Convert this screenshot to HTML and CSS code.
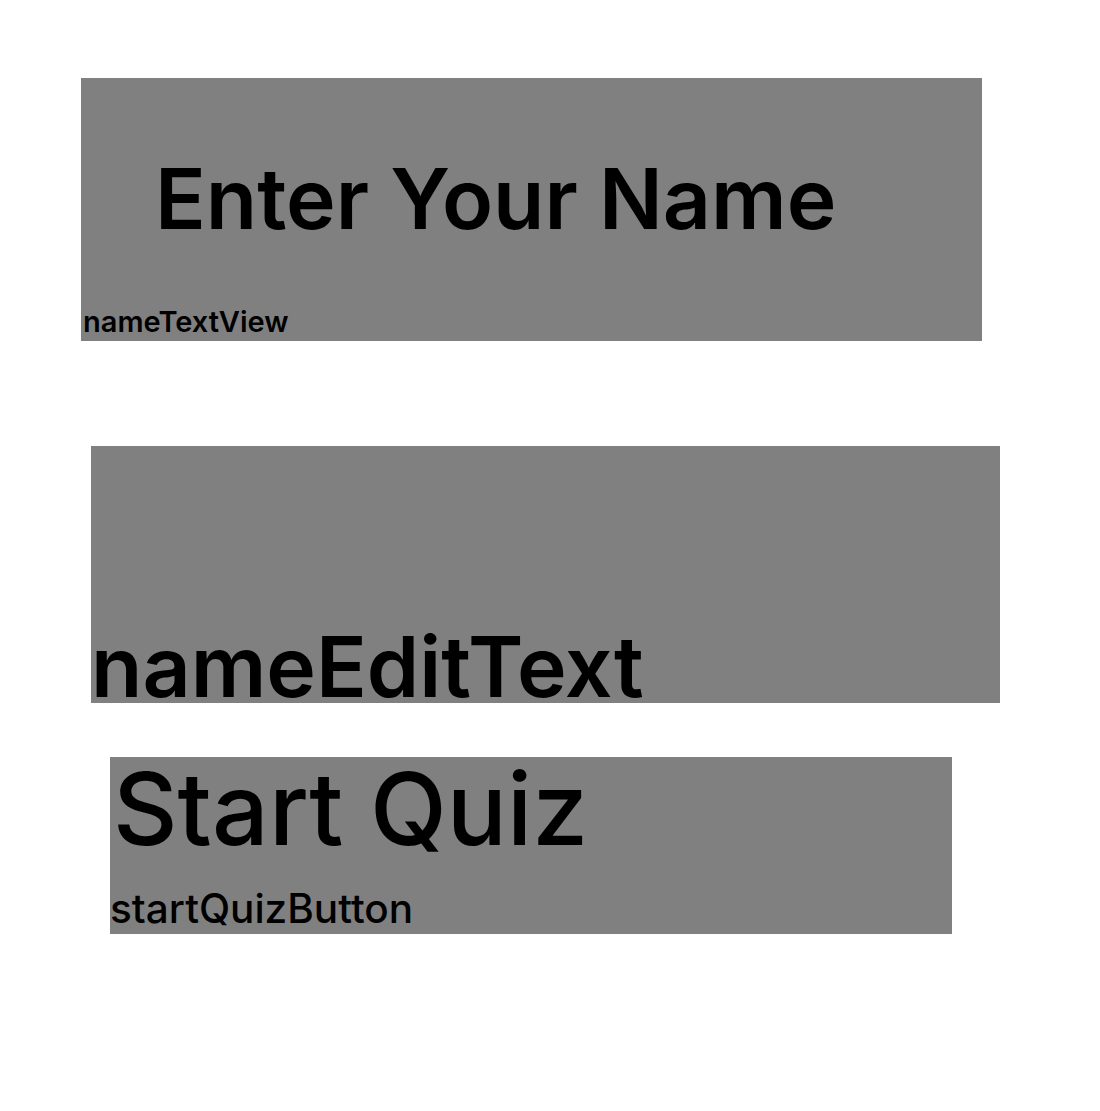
FILE: index.html
```html
<!DOCTYPE html>
<html lang="en">
<head>
<meta charset="utf-8">
<title>Quiz Start</title>
<link rel="stylesheet" href="styles.css">
</head>
<body>
<main class="screen">
  <section class="box box-name">
    <h1 class="title">Enter Your Name</h1>
    <span class="label label-name">nameTextView</span>
  </section>
  <section class="box box-edit">
    <span class="edit-text">nameEditText</span>
  </section>
  <section class="box box-button">
    <span class="button-text">Start Quiz</span>
    <span class="label label-button">startQuizButton</span>
  </section>
</main>
</body>
</html>
```
FILE: styles.css
```css
html, body {
  margin: 0;
  padding: 0;
  background: #ffffff;
}
body {
  font-family: Inter, "Noto Sans", sans-serif;
  color: #000000;
  width: 1100px;
  height: 1111px;
  overflow: hidden;
}
.screen {
  display: flex;
  flex-direction: column;
  align-items: flex-start;
  padding-top: 78px;
}
.box {
  background: #808080;
  display: flex;
  flex-direction: column;
  align-items: flex-start;
  box-sizing: border-box;
}
.box-name {
  margin-left: 81px;
  width: 901px;
  height: 263px;
  padding-top: 79px;
}
.title {
  margin: 0 0 0 74px;
  font-size: 84px;
  font-weight: 600;
  line-height: 1;
}
.label {
  line-height: 1;
}
.label-name {
  font-size: 29px;
  font-weight: 600;
  margin: 66px 0 0 2px;
}
.box-edit {
  margin-top: 105px;
  margin-left: 91px;
  width: 909px;
  height: 257px;
  padding-top: 179px;
}
.edit-text {
  font-size: 84px;
  font-weight: 600;
  line-height: 1;
}
.box-button {
  margin-top: 54px;
  margin-left: 110px;
  width: 842px;
  height: 177px;
  padding-top: 2px;
}
.button-text {
  font-size: 100px;
  font-weight: 500;
  line-height: 1;
  margin-left: 3px;
}
.label-button {
  font-size: 40.5px;
  font-weight: 500;
  margin-top: 30px;
}
```
